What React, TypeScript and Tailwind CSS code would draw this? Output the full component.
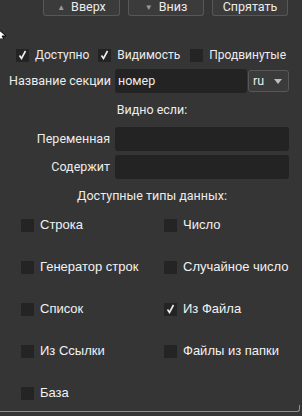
import React from 'react'

function Check({ on }: { on?: boolean }) {
  return (
    <span className="w-[13px] h-[13px] bg-[#242424] flex items-center justify-center shrink-0">
      {on && (
        <svg width="9" height="10" viewBox="0 0 9 10">
          <path d="M1.5 5.5 L3.5 8.5 L7.5 1" stroke="#f0f0f0" strokeWidth="1.6" fill="none" />
        </svg>
      )}
    </span>
  )
}

const types: [string, boolean][] = [
  ['Строка', false],
  ['Число', false],
  ['Генератор строк', false],
  ['Случайное число', false],
  ['Список', false],
  ['Из Файла', true],
  ['Из Ссылки', false],
  ['Файлы из папки', false],
  ['База', false],
]

export default function App() {
  return (
    <div
      className="relative w-[302px] h-[416px] bg-[#353535] overflow-hidden text-[#ececec] text-[12.5px]"
      style={{ fontFamily: 'Roboto, sans-serif' }}
    >
      {/* top buttons */}
      <div className="flex justify-end gap-[8px] pr-[14px]">
        <button className="w-[77px] h-[16px] bg-[#3b3b3b] border border-t-0 border-[#575757] rounded-b-[3px] flex items-center justify-center gap-[6px] leading-none">
          <span className="text-[#9a9a9a] text-[8px]">▲</span>
          <span>Вверх</span>
        </button>
        <button className="w-[76px] h-[16px] bg-[#3b3b3b] border border-t-0 border-[#575757] rounded-b-[3px] flex items-center justify-center gap-[6px] leading-none">
          <span className="text-[#9a9a9a] text-[8px]">▼</span>
          <span>Вниз</span>
        </button>
        <button className="w-[76px] h-[16px] bg-[#3b3b3b] border border-t-0 border-[#575757] rounded-b-[3px] flex items-center justify-center leading-none">
          Спрятать
        </button>
      </div>

      {/* mouse cursor */}
      <svg className="absolute left-0 top-[28px]" width="7" height="11" viewBox="0 0 7 11">
        <path d="M-3 0 L6 8 L2 8 L4 11 L-3 11 Z" fill="#ffffff" stroke="#000" strokeWidth="1" />
      </svg>

      {/* flags */}
      <div className="flex items-center mt-[31px] pl-[16px] h-[16px] text-[12px]">
        <Check on />
        <span className="ml-[6px]">Доступно</span>
        <span className="ml-[9px]"><Check on /></span>
        <span className="ml-[6px]">Видимость</span>
        <span className="ml-[10px]"><Check /></span>
        <span className="ml-[6px]">Продвинутые</span>
      </div>

      {/* section name */}
      <div className="flex items-center mt-[6px] h-[24px]">
        <span className="w-[111px] text-right">Название секции</span>
        <div className="ml-[4px] w-[132px] h-[24px] bg-[#232323] rounded-[3px] flex items-center pl-[3px]">номер</div>
        <div className="ml-[1px] w-[41px] h-[22px] bg-[#3b3b3b] border border-[#575757] rounded-[3px] flex items-center justify-between pl-[4px] pr-[6px]">
          <span>ru</span>
          <svg width="8" height="5" viewBox="0 0 8 5">
            <path d="M0 0 L8 0 L4 5 Z" fill="#bdbdbd" />
          </svg>
        </div>
      </div>

      <div className="text-center mt-[8px] h-[20px] pl-[2px]">Видно если:</div>

      <div className="flex items-center mt-[6px]">
        <span className="w-[110px] text-right">Переменная</span>
        <div className="ml-[5px] w-[174px] h-[24px] bg-[#232323] rounded-[3px]" />
      </div>
      <div className="flex items-center mt-[4px]">
        <span className="w-[110px] text-right">Содержит</span>
        <div className="ml-[5px] w-[174px] h-[24px] bg-[#232323] rounded-[3px]" />
      </div>

      <div className="text-center mt-[8px] h-[20px] pl-[2px]">Доступные типы данных:</div>

      {/* data types */}
      <div
        className="grid grid-cols-[143px_1fr] pl-[21px] -mt-[3px] text-[13px] text-[#f2f2f2]"
        style={{ fontFamily: '"Liberation Sans", sans-serif' }}
      >
        {types.map(([label, on]) => (
          <div key={label} className="flex items-center h-[42px]">
            <Check on={on} />
            <span className="ml-[6px]">{label}</span>
          </div>
        ))}
      </div>

      {/* group box bottom edge */}
      <div className="absolute left-[-2px] top-[405px] w-[302px] h-[7px] border-b border-r border-[#8e8e8e] rounded-br-[3px]" />
    </div>
  )
}
